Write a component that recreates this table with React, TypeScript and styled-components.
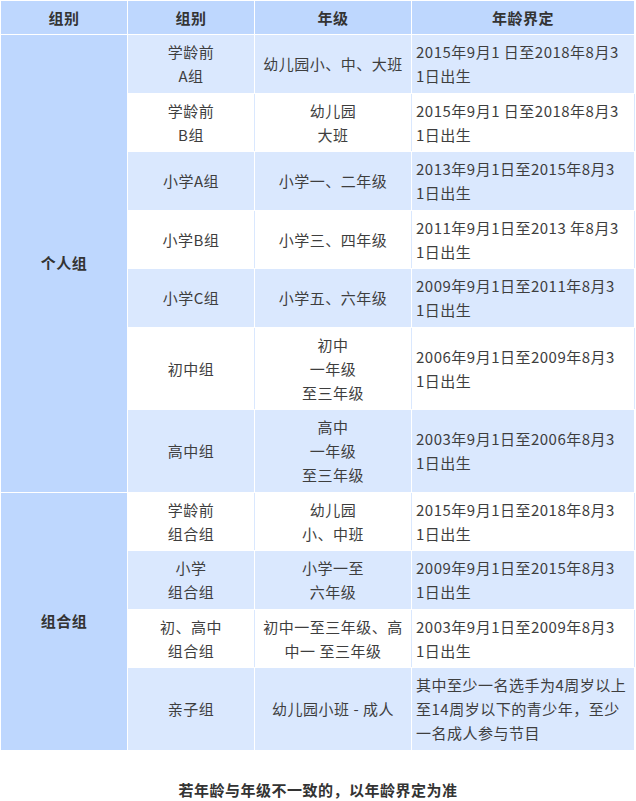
import styled, { createGlobalStyle } from "styled-components";

const GlobalStyle = createGlobalStyle`
  body {
    margin: 0;
    background: #fff;
    font-family: "Noto Sans CJK SC", "Noto Sans", sans-serif;
    color: #3e3e3e;
  }
`;

const Page = styled.div`
  width: 636px;
`;

const Table = styled.table`
  width: 634px;
  border-collapse: collapse;
  table-layout: fixed;
  font-size: 15px;
  letter-spacing: 0.5px;
  line-height: 24px;
`;

const HeadCell = styled.th`
  background: #bed7fe;
  border: 1px solid #fff;
  padding: 5px 4px 4px;
  font-weight: bold;
  color: #333;
  text-align: center;
`;

const GroupCell = styled.td`
  background: #bed7fe;
  border: 1px solid #fff;
  font-weight: bold;
  color: #333;
  text-align: center;
  vertical-align: middle;
`;

const Cell = styled.td<{ $shaded: boolean; $left?: boolean }>`
  background: ${(p) => (p.$shaded ? "#dae8fe" : "#fff")};
  border: 1px solid #fff;
  border-left-color: ${(p) => (p.$shaded ? "#fff" : "#dae8fe")};
  border-right-color: ${(p) => (p.$shaded ? "#fff" : "#dae8fe")};
  padding: ${(p) => (p.$left ? "5px 2px 4.5px 4px" : "5px 4px 4.5px")};
  text-align: ${(p) => (p.$left ? "left" : "center")};
  vertical-align: middle;
  white-space: pre-line;
`;

const Note = styled.p`
  margin: 28px 0 0;
  text-align: center;
  font-size: 15px;
  font-weight: bold;
  line-height: 22px;
  letter-spacing: 0.5px;
  color: #333;
`;

type Row = { name: string; grade: string; age: string };

const groups: { title: string; rows: Row[] }[] = [
  {
    title: "个人组",
    rows: [
      { name: "学龄前\nA组", grade: "幼儿园小、中、大班", age: "2015年9月1 日至2018年8月3\n1日出生" },
      { name: "学龄前\nB组", grade: "幼儿园\n大班", age: "2015年9月1 日至2018年8月3\n1日出生" },
      { name: "小学A组", grade: "小学一、二年级", age: "2013年9月1日至2015年8月3\n1日出生" },
      { name: "小学B组", grade: "小学三、四年级", age: "2011年9月1日至2013 年8月3\n1日出生" },
      { name: "小学C组", grade: "小学五、六年级", age: "2009年9月1日至2011年8月3\n1日出生" },
      { name: "初中组", grade: "初中\n一年级\n至三年级", age: "2006年9月1日至2009年8月3\n1日出生" },
      { name: "高中组", grade: "高中\n一年级\n至三年级", age: "2003年9月1日至2006年8月3\n1日出生" },
    ],
  },
  {
    title: "组合组",
    rows: [
      { name: "学龄前\n组合组", grade: "幼儿园\n小、中班", age: "2015年9月1日至2018年8月3\n1日出生" },
      { name: "小学\n组合组", grade: "小学一至\n六年级", age: "2009年9月1日至2015年8月3\n1日出生" },
      { name: "初、高中\n组合组", grade: "初中一至三年级、高\n中一 至三年级", age: "2003年9月1日至2009年8月3\n1日出生" },
      {
        name: "亲子组",
        grade: "幼儿园小班 - 成人",
        age: "其中至少一名选手为4周岁以上\n至14周岁以下的青少年，至少\n一名成人参与节目",
      },
    ],
  },
];

export default function App() {
  let index = 0;
  return (
    <Page>
      <GlobalStyle />
      <Table>
        <colgroup>
          <col style={{ width: 127 }} />
          <col style={{ width: 127 }} />
          <col style={{ width: 157 }} />
          <col style={{ width: 223 }} />
        </colgroup>
        <thead>
          <tr>
            <HeadCell>组别</HeadCell>
            <HeadCell>组别</HeadCell>
            <HeadCell>年级</HeadCell>
            <HeadCell>年龄界定</HeadCell>
          </tr>
        </thead>
        <tbody>
          {groups.map((g) =>
            g.rows.map((r, i) => {
              const shaded = index++ % 2 === 0;
              return (
                <tr key={g.title + i}>
                  {i === 0 && <GroupCell rowSpan={g.rows.length}>{g.title}</GroupCell>}
                  <Cell $shaded={shaded}>{r.name}</Cell>
                  <Cell $shaded={shaded}>{r.grade}</Cell>
                  <Cell $shaded={shaded} $left>
                    {r.age}
                  </Cell>
                </tr>
              );
            })
          )}
        </tbody>
      </Table>
      <Note>若年龄与年级不一致的，以年龄界定为准</Note>
    </Page>
  );
}
